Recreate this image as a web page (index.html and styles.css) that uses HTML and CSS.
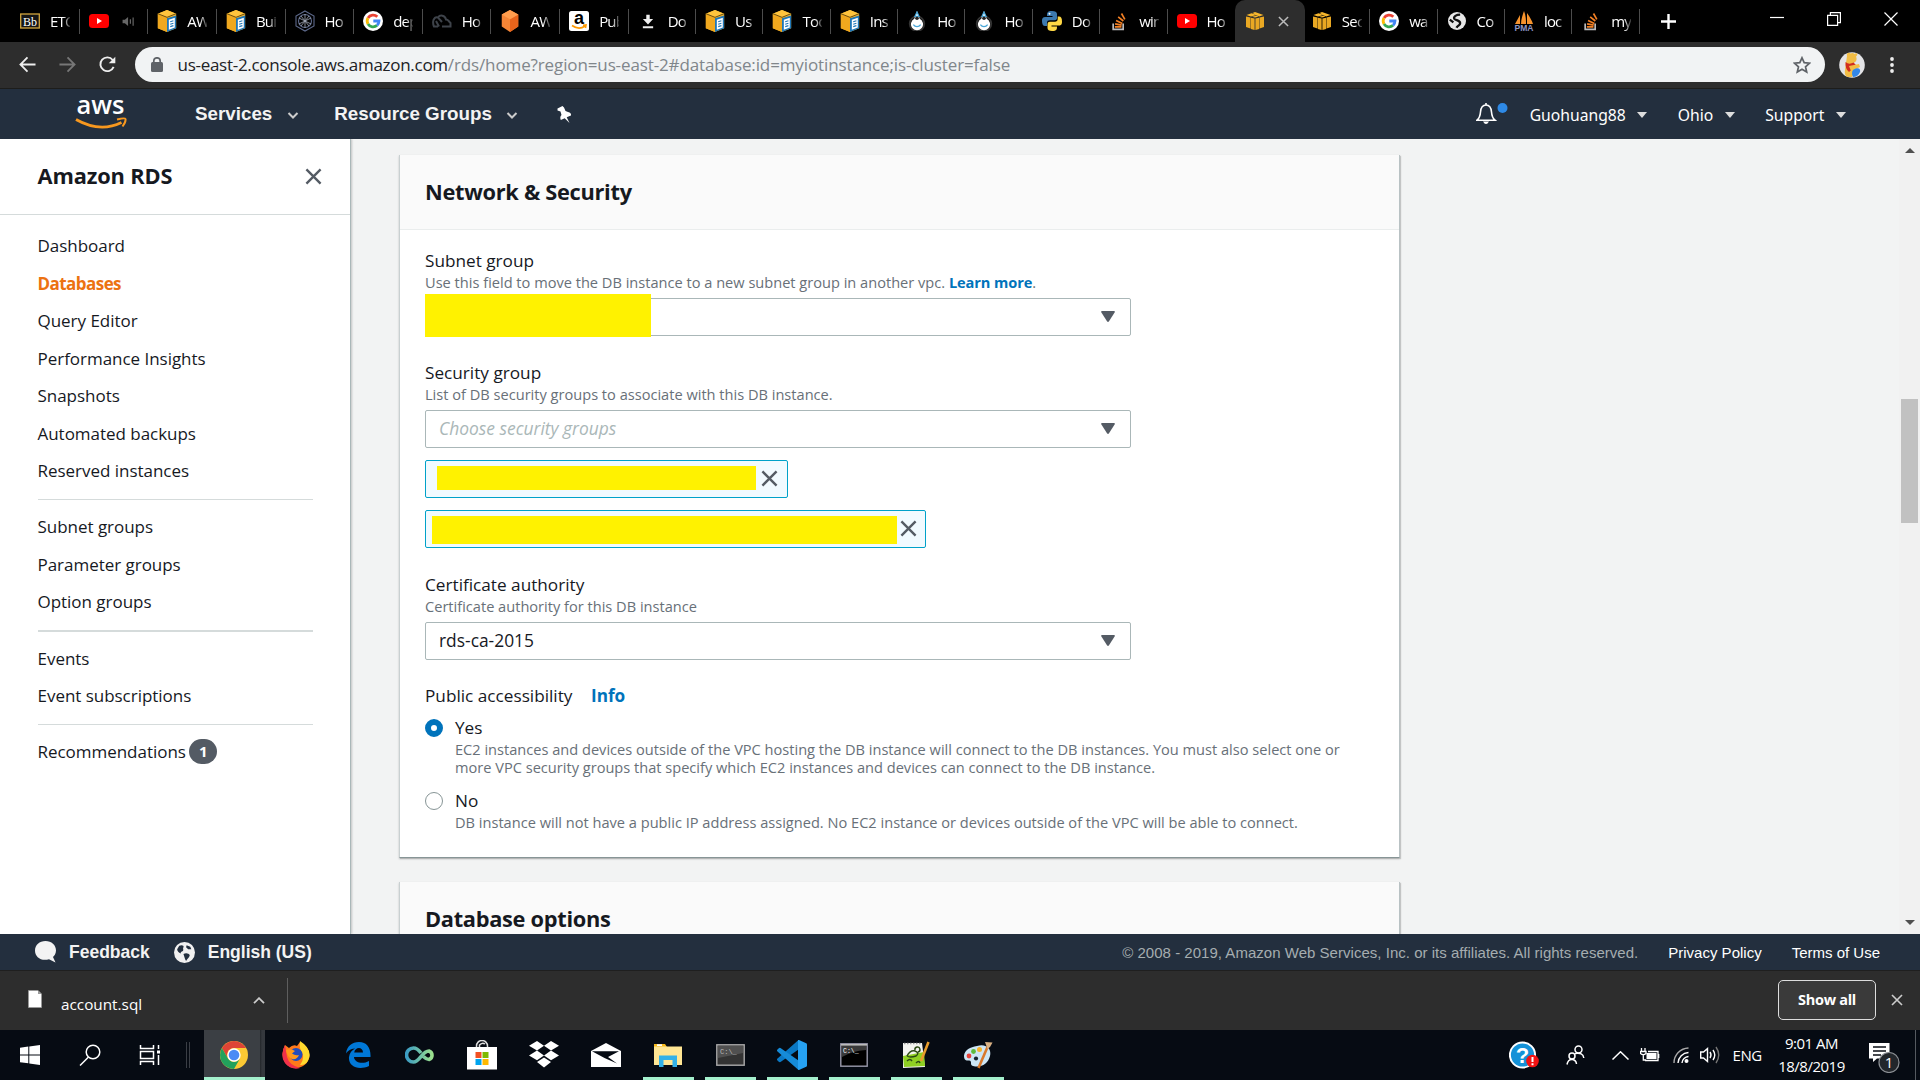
FILE: index.html
```html
<!DOCTYPE html>
<html lang="en">
<head>
<meta charset="utf-8">
<title>RDS · AWS Console</title>
<link rel="stylesheet" href="styles.css">
</head>
<body>
<svg class="defs" aria-hidden="true">
  <symbol id="i-doc" viewBox="0 0 20 24"><path fill="#f0b32e" d="M10 0 20 4 20 20 10 24 0 20 0 4Z"/><path fill="#f0a81e" d="M0 4 10 8V24L0 20Z"/><path fill="#ffc43d" d="M10 0 20 4 10 8 0 4Z"/><path stroke="#5d430c" stroke-width="1" fill="none" d="M0 4 10 8 20 4"/><path fill="#1f77b8" d="M10 9 20 6V20L10 24Z"/><path fill="#fff" d="M12 10.500 18.500 8.500V19L12 21.500Z"/><path stroke="#1f77b8" stroke-width="1.300" d="M13.500 12.800 17 11.700M13.500 15.500 17 14.400M13.500 18.200 17 17.100"/></symbol>
  <symbol id="i-cube" viewBox="0 0 18 18"><path fill="#e9a823" d="M0 4.500 4.500 5.500V16.500L0 15ZM4.900 5.700 8.600 6.400V18L4.900 17ZM9.400 6.400 13.100 5.700V17L9.400 18ZM13.500 5.500 18 4.500V15L13.500 16.500Z"/><path fill="#f6b62c" d="M.5 3 5.500 1.200 10.500 3 5 4.500ZM6.500.9 9 0 17.500 3 13 4.500ZM6 4.700 11.300 3.400 12 4.700 9 5.500Z"/></symbol>
  <symbol id="i-hex" viewBox="0 0 20 24"><path fill="#f58536" d="M10 0 19 5V18L10 24 1 18V5Z"/><path fill="#e8641b" d="M10 10 19 5V18L10 24Z"/><path fill="#ff9d4d" d="M10 0 19 5 10 10 1 5Z"/></symbol>
  <symbol id="i-yt" viewBox="0 0 20 14"><rect width="20" height="14" rx="3.500" fill="#f00"/><path fill="#fff" d="M8 4 13 7 8 10Z"/></symbol>
  <symbol id="i-google" viewBox="0 0 20 20"><circle cx="10" cy="10" r="10" fill="#fff"/><g fill="none" stroke-width="2.800"><path stroke="#ea4335" d="M5 7A6 6 0 0 1 14.300 5.800"/><path stroke="#fbbc05" d="M5 7A6 6 0 0 0 5 13"/><path stroke="#34a853" d="M5 13A6 6 0 0 0 14 14.400"/><path stroke="#4285f4" d="M14 14.400A6 6 0 0 0 16 10H10.300"/></g></symbol>
  <symbol id="i-drop" viewBox="0 0 20 22"><circle cx="10" cy="14" r="8" fill="none" stroke="#333" stroke-width="2"/><path fill="#fff" d="M10 0C11 4 12 5.500 13 8.500A6.700 6.700 0 1 1 7 8.500C8 5.500 9 4 10 0Z"/><path stroke="#49a7d8" fill="none" stroke-width="1.300" d="M10 1 12.300 6H7.700ZM6 15C8 18 12 18 14 15"/><circle cx="10" cy="8" r="2" fill="#222"/></symbol>
  <symbol id="i-stack" viewBox="0 0 20 24"><path fill="none" stroke="#bcbbbb" stroke-width="2" d="M3 15V22H15V15"/><path stroke="#f48024" stroke-width="2" d="M5 19H13M5.300 15.500 13.200 17M6.500 11.500 14 15M9 7 15.200 12M13 3 17 10"/></symbol>
  <symbol id="i-globe" viewBox="0 0 20 20"><circle cx="10" cy="10" r="10" fill="#f1f1f1"/><path fill="currentColor" d="M5 3.500C7 2.500 10 3 9 5 8 6.500 9.500 7 8.500 8.500 7 9 6 9.500 6.500 11 4.500 10.500 3 8.500 3 7ZM12 3 15.500 4.500 16.500 7 13.500 7 11.500 5ZM9 11.500C11 10 14 10.500 15 12.500 14.500 15 12.500 16 11.500 18 10 16 10 14 9 11.500Z"/></symbol>
  <symbol id="i-swirl" viewBox="0 0 20 20"><circle cx="10" cy="10" r="10" fill="#e8e8e8"/><path fill="none" stroke="#111" stroke-width="2.600" d="M13.500 3C9 3 6 5 7 7.500 8 9.500 13.500 9 13.500 12.500 13.500 15 10.500 15 9.500 17.500M2 8.500 6 11.500"/></symbol>
  <symbol id="i-x" viewBox="0 0 18 18"><path fill="none" stroke="currentColor" stroke-width="2.500" d="M1.500 1.500 16.500 16.500M16.500 1.500 1.500 16.500"/></symbol>
  <symbol id="i-tri" viewBox="0 0 14 11"><path fill="currentColor" d="M.8 0H13.200Q14.200.3 13.600 1.500L8 10.300Q7 11.500 6 10.300L.4 1.500Q-.2.300.8 0Z"/></symbol>
</svg>

<header class="tabs">
  <div class="tab wide"><svg class="fav" viewBox="0 0 20 20"><rect x=".7" y="3" width="18.600" height="14" fill="#151515" stroke="#d3a63e" stroke-width="1.300"/><text x="10" y="14.500" font-size="12" font-family="Liberation Serif, serif" fill="#fff" text-anchor="middle">Bb</text></svg><span>ETC</span></div>
  <div class="tab wide"><svg class="fav yt"><use href="#i-yt"/></svg><svg class="mute" viewBox="0 0 14 12"><path fill="#666" d="M0 4H2.500L6 1V11L2.500 8H0Z"/><path stroke="#666" stroke-width="1.300" fill="none" d="M8.500 3.500V8.500M11.500 1.500V10.500"/></svg></div>
  <div class="tab wide"><svg class="fav doc"><use href="#i-doc"/></svg><span>AW</span></div>
  <div class="tab wide"><svg class="fav doc"><use href="#i-doc"/></svg><span>Bui</span></div>
  <div class="tab wide"><svg class="fav doc" viewBox="0 0 20 22"><g fill="none" stroke="#5e6a8c" stroke-width="1.100"><path d="M10 1 19 6V16L10 21 1 16V6Z"/><circle cx="10" cy="11" r="6.500"/><path stroke="#a5abba" stroke-width=".8" d="M4 8 16 14M16 8 4 14M10 4V18M6 6 14 16M14 6 6 16"/></g></svg><span>Ho</span></div>
  <div class="tab wide"><svg class="fav"><use href="#i-google"/></svg><span>dep</span></div>
  <div class="tab wide"><svg class="fav" viewBox="0 0 20 20"><path fill="none" stroke="#3e434a" stroke-width="2" d="M6 15.500H2Q.5 12 1.500 9 3 5.500 6 6.500L10 11M7 15.500 4 10M6 6.500C8 3.500 13 4 14 8.500 16.500 8.500 16 10 18.500 12V15.500H10"/></svg><span>Ho</span></div>
  <div class="tab wide"><svg class="fav doc"><use href="#i-hex"/></svg><span>AW</span></div>
  <div class="tab wide"><svg class="fav" viewBox="0 0 20 20"><rect width="20" height="20" rx="2.500" fill="#fff"/><text x="10" y="13" font-size="18" font-weight="700" font-family="Liberation Sans, sans-serif" text-anchor="middle">a</text><path fill="none" stroke="#f90" stroke-width="1.600" d="M3 14.500Q10 19.500 16 15M14 14.300 17 14 16.500 17"/></svg><span>Pub</span></div>
  <div class="tab"><svg class="fav dl" viewBox="0 0 14 16"><path fill="#eee" d="M5 0H9V5H13L7 11.500 1 5H5ZM1 13.500H13V16H1Z"/></svg><span>Do</span></div>
  <div class="tab"><svg class="fav doc"><use href="#i-doc"/></svg><span>Us</span></div>
  <div class="tab"><svg class="fav doc"><use href="#i-doc"/></svg><span>Too</span></div>
  <div class="tab"><svg class="fav doc"><use href="#i-doc"/></svg><span>Ins</span></div>
  <div class="tab"><svg class="fav"><use href="#i-drop"/></svg><span>Ho</span></div>
  <div class="tab"><svg class="fav"><use href="#i-drop"/></svg><span>Ho</span></div>
  <div class="tab"><svg class="fav" viewBox="0 0 20 20"><path fill="#3c79ae" d="M10 0C5 0 5 2 5 5H10.500V6H3C0 6 0 9 0 10 0 13 1 15 3 15H5V12C5 10 6 9.300 8 9.300H12.500C14.500 9.300 15 8 15 7V3C15 1 13 0 10 0Z"/><path fill="#ffd845" d="M10 20C15 20 15 18 15 15.500H9.500V14.500H17C20 14.500 20 12 20 10.500 20 7 19 5.500 17 5.500H15.700V8C15.700 10 14.500 10.700 13 10.700H8C6 10.700 5.500 12 5.500 13.500V17C5.500 19 7 20 10 20Z"/><circle cx="7.500" cy="2.700" r="1" fill="#fff"/></svg><span>Do</span></div>
  <div class="tab"><svg class="fav"><use href="#i-stack"/></svg><span>win</span></div>
  <div class="tab last"><svg class="fav yt"><use href="#i-yt"/></svg><span>Ho</span></div>
  <div class="tab active"><svg class="fav cube"><use href="#i-cube"/></svg><svg class="tx" viewBox="0 0 18 18"><use href="#i-x"/></svg></div>
  <div class="tab"><svg class="fav cube"><use href="#i-cube"/></svg><span>Sec</span></div>
  <div class="tab"><svg class="fav"><use href="#i-google"/></svg><span>wa</span></div>
  <div class="tab"><svg class="fav globe"><use href="#i-swirl"/></svg><span>Co</span></div>
  <div class="tab"><svg class="fav" viewBox="0 0 20 20"><path fill="#f6932d" d="M1 13 6 4V13ZM7 13C7 8 9 3 10 0 12 5 12 9 12 13ZM13 13V2C16 6 18 10 19 13Z"/><text x="10" y="19.500" font-size="8.500" font-weight="700" font-family="Liberation Sans, sans-serif" fill="#8d97c4" text-anchor="middle">PMA</text></svg><span>loc</span></div>
  <div class="tab"><svg class="fav"><use href="#i-stack"/></svg><span>my</span></div>
  <svg class="plus" viewBox="0 0 15 15"><path stroke="#fff" stroke-width="2.400" d="M7.500 0V15M0 7.500H15"/></svg>
  <div class="winctl">
    <svg viewBox="0 0 14 14"><path stroke="#fff" stroke-width="1.200" d="M0 5.500H14"/></svg>
    <svg viewBox="0 0 14 14"><path fill="none" stroke="#fff" stroke-width="1.200" d="M.6 3.400H10.600V13.400H.6ZM3.400 3.400V.6H13.400V10.600H10.600"/></svg>
    <svg viewBox="0 0 14 14"><path stroke="#fff" stroke-width="1.200" d="M.5.500 13.500 13.500M13.500.500.5 13.500"/></svg>
  </div>
</header>

<div class="toolbar">
  <svg class="nav" viewBox="0 0 18 18"><path fill="none" stroke="#eee" stroke-width="1.900" d="M17.500 9H2M9 1.500 1.500 9 9 16.500"/></svg>
  <svg class="nav" viewBox="0 0 18 18"><path fill="none" stroke="#777" stroke-width="1.900" d="M.5 9H16M9 1.500 16.500 9 9 16.500"/></svg>
  <svg class="nav" viewBox="0 0 18 18"><path fill="none" stroke="#eee" stroke-width="2" d="M15.500 11.500A7.300 7.300 0 1 1 14.500 4.200"/><path fill="#eee" d="M17.300.8V7.800H10.300Z"/></svg>
  <div class="omni">
    <svg class="lock" viewBox="0 0 12 15"><rect y="5" width="12" height="10" rx="1.500" fill="#5f6368"/><path fill="none" stroke="#5f6368" stroke-width="1.700" d="M2.800 6V4A3.200 3.200 0 0 1 9.200 4V6"/></svg>
    <p class="url"><b>us-east-2.console.aws.amazon.com</b>/rds/home?region=us-east-2#database:id=myiotinstance;is-cluster=false</p>
    <svg class="star" viewBox="0 0 18 18"><path fill="none" stroke="#5f6368" stroke-width="1.700" d="M9 1.800 11.200 6.700 16.500 7.200 12.500 10.800 13.700 16 9 13.200 4.300 16 5.500 10.800 1.500 7.200 6.800 6.700Z"/></svg>
  </div>
  <svg class="avatar" viewBox="0 0 26 26"><circle cx="13" cy="13" r="12.800" fill="#e4e4e6"/><path fill="#f2bd45" d="M8 4C7 1 10 0 11.500 1.500Q14 .5 15.500 2C18-.5 19.500 3 17 4.500 18.500 8 17 10 14.500 11L17 18 13 25H9Q5 24 6 18Z"/><path fill="#d22d1e" d="M6.500 10Q10 13 14.500 10.500L18 14Q13 17 10 20 6 17 6.500 10Z"/><path fill="#f2bd45" d="M10 14 20 12 21 15 12 19Z"/><path fill="#3287e8" d="M14 18C18 15 22 16 21 20Q19 25 14 25 12 21 14 18Z"/></svg>
  <svg class="dots" viewBox="0 0 4 16"><g fill="#eee"><circle cx="2" cy="2" r="1.900"/><circle cx="2" cy="8" r="1.900"/><circle cx="2" cy="14" r="1.900"/></g></svg>
</div>

<nav class="aws">
  <svg class="awslogo" viewBox="0 0 52 32"><text x="25.500" y="16" textLength="48" lengthAdjust="spacingAndGlyphs" font-size="26" font-family="Open Sans, sans-serif" font-weight="600" fill="#fff" text-anchor="middle">aws</text><path fill="none" stroke="#f7981f" stroke-width="2.800" d="M1 21.500Q25 35 46.500 24.500"/><path fill="none" stroke="#f7981f" stroke-width="2" d="M42 21.500Q50 19.500 50.500 21 51 24 47.500 28.500"/></svg>
  <span class="m services">Services</span><svg class="chev" viewBox="0 0 12 7"><path fill="none" stroke="#ccc" stroke-width="2" d="M1.500 1 6 5.500 10.500 1"/></svg>
  <span class="m groups">Resource Groups</span><svg class="chev" viewBox="0 0 12 7"><path fill="none" stroke="#ccc" stroke-width="2" d="M1.500 1 6 5.500 10.500 1"/></svg>
  <svg class="pin" viewBox="0 0 15 17"><path fill="#fff" d="M5.500 0 7 1.500 8.500 5 11 6Q14.500 6.500 14 9.500L9.700 11.300 12.500 17 7.700 12.200 3.800 14Q2.500 11 4.500 9L3.500 5.500.5 4.500.5 2.500Z"/></svg>
  <span class="grow"></span>
  <svg class="bell" viewBox="0 0 32 22"><path fill="none" stroke="#fff" stroke-width="1.600" d="M10 2C5.500 2 4.800 5.500 4.500 9 4.200 13 3 15.500 1 17.200H19C17 15.500 15.800 13 15.500 9 15.200 5.500 14.500 2 10 2ZM10 0V2"/><path fill="#fff" d="M7 18.500H13Q10 23.500 7 18.500Z"/><circle cx="26.500" cy="5" r="5" fill="#2e8ae6"/></svg>
  <span class="u user">Guohuang88</span><i class="tri"></i>
  <span class="u ohio">Ohio</span><i class="tri"></i>
  <span class="u support">Support</span><i class="tri"></i>
</nav>

<div class="body">
  <aside class="side">
    <div class="sidehead"><h1>Amazon RDS</h1><svg class="x16"><use href="#i-x"/></svg></div>
    <ul>
      <li><span>Dashboard</span></li><li class="on"><span>Databases</span></li><li><span>Query Editor</span></li><li><span>Performance Insights</span></li><li><span>Snapshots</span></li><li><span>Automated backups</span></li><li><span>Reserved instances</span></li>
    </ul>
    <ul>
      <li><span>Subnet groups</span></li><li><span>Parameter groups</span></li><li><span>Option groups</span></li>
    </ul>
    <ul class="thick">
      <li><span>Events</span></li><li><span>Event subscriptions</span></li>
    </ul>
    <ul>
      <li><span>Recommendations</span><em>1</em></li>
    </ul>
  </aside>
  <main>
    <section class="panel">
      <h2>Network &amp; Security</h2>
      <div class="fields">
        <div class="field">
          <label>Subnet group</label>
          <p class="hint">Use this field to move the DB instance to a new subnet group in another vpc. <a>Learn more</a>.</p>
          <div class="select"><span class="mask"></span><svg class="arrow"><use href="#i-tri"/></svg></div>
        </div>
        <div class="field tall">
          <label>Security group</label>
          <p class="hint">List of DB security groups to associate with this DB instance.</p>
          <div class="select"><span class="ph">Choose security groups</span><svg class="arrow"><use href="#i-tri"/></svg></div>
          <div class="token t1"><span></span><svg><use href="#i-x"/></svg></div>
          <div class="token t2"><span></span><svg><use href="#i-x"/></svg></div>
        </div>
        <div class="field">
          <label>Certificate authority</label>
          <p class="hint">Certificate authority for this DB instance</p>
          <div class="select"><span class="val">rds-ca-2015</span><svg class="arrow"><use href="#i-tri"/></svg></div>
        </div>
        <div class="field">
          <label class="pa">Public accessibility<a>Info</a></label>
          <div class="radio"><i class="dot sel"></i><div><label>Yes</label><p class="hint d1">EC2 instances and devices outside of the VPC hosting the DB instance will connect to the DB instances. You must also select one or<br>more VPC security groups that specify which EC2 instances and devices can connect to the DB instance.</p></div></div>
          <div class="radio"><i class="dot"></i><div><label>No</label><p class="hint d1">DB instance will not have a public IP address assigned. No EC2 instance or devices outside of the VPC will be able to connect.</p></div></div>
        </div>
      </div>
    </section>
    <section class="panel next"><h2>Database options</h2></section>
  </main>
  <div class="scroll"><i class="up"></i><div class="track"><b></b></div><i class="down"></i></div>
</div>

<footer class="foot">
  <svg class="bubble" viewBox="0 0 22 22"><path fill="#f3f3f3" d="M10.500 0C16.500 0 21 4 21 9.500 21 13 19 15 18 16L20.500 21.500 14 18.300C6 20.500 0 16 0 9.500 0 4 4.500 0 10.500 0Z"/></svg>
  <span class="fb feed">Feedback</span>
  <svg class="world" viewBox="0 0 20 20"><use href="#i-globe"/></svg>
  <span class="fb">English (US)</span>
  <span class="grow"></span>
  <span class="copy">© 2008 - 2019, Amazon Web Services, Inc. or its affiliates. All rights reserved.</span>
  <span class="fl pp">Privacy Policy</span><span class="fl">Terms of Use</span>
</footer>

<div class="downloads">
  <svg class="file" viewBox="0 0 14 18"><path fill="#fff" stroke="#999" stroke-width=".8" d="M.5.500H10L13.500 4V17.500H.5Z"/><path fill="#999" d="M10 .5V4H13.500Z"/></svg>
  <span class="fname">account.sql</span>
  <svg class="caret" viewBox="0 0 12 7"><path fill="none" stroke="#ccc" stroke-width="1.800" d="M1 6.200 6 1.200 11 6.200"/></svg>
  <i class="vsep"></i>
  <span class="grow"></span>
  <button>Show all</button>
  <svg class="dx"><use href="#i-x"/></svg>
</div>

<div class="taskbar">
  <div class="ti sm"><svg width="20" height="20" viewBox="0 0 20 20"><path fill="#fff" d="M0 2.800 8.300 1.600V9.400H0ZM9.300 1.500 20 0V9.400H9.300ZM0 10.500H8.300V18.300L0 17.200ZM9.300 10.500H20V20L9.300 18.500Z"/></svg></div>
  <div class="ti sm"><svg width="22" height="22" viewBox="0 0 22 22"><g fill="none" stroke="#fff" stroke-width="1.500"><circle cx="14" cy="8" r="6.800"/><path d="M9.500 13 1 21.500"/></g></svg></div>
  <div class="ti sm"><svg width="22" height="22" viewBox="0 0 22 22"><path fill="none" stroke="#fff" stroke-width="1.500" d="M1.500 1V4.500H14.500V1M1.500 7.500H14.500V14.500H1.500ZM1.500 21V17.500H14.500V21M19.500 1V5M19.500 11V21"/><path fill="#fff" d="M18 6.500H21V9.500H18Z"/></svg></div>
  <div class="grip"></div>
  <div class="ti cur run"><svg width="28" height="28" viewBox="0 0 28 28"><circle cx="14" cy="14" r="14" fill="#fbc934"/><path fill="#de4436" d="M1.900 7A14 14 0 0 1 26.100 7H14A7 7 0 0 0 8 17.500Z"/><path fill="#22a15c" d="M1.900 7A14 14 0 0 0 14 28L20 17.500A7 7 0 0 1 8 17.500Z"/><circle cx="14" cy="14" r="6.700" fill="#fff"/><circle cx="14" cy="14" r="5.300" fill="#4c8bf5"/></svg></div>
  <div class="ti"><svg width="28" height="28" viewBox="0 0 28 28"><path fill="#ff7a1a" d="M3 4 7 7Q11 3 15 5L18 1Q27 6 27.500 14A13.500 13.500 0 1 1 .6 12Q1 8 3 4Z"/><path fill="#f0304a" d="M.6 12A13.500 13.500 0 0 0 18 27Q7 24 5 16L3 4Q1 8 .6 12Z"/><path fill="#ffd92e" d="M18 0Q29 7 27.400 16 25 25 18 24 23 18 20 11 17 8 18 0Z"/><circle cx="14" cy="13.500" r="6.500" fill="#214dbb"/><path fill="#ff9a1a" d="M4 9Q9 7 13 10L10 12.500Q13 15 17 14 15 19 10 18 5 16 4 9Z"/></svg></div>
  <div class="ti"><svg width="25" height="26" viewBox="0 0 25 26"><path fill="#0078d7" d="M0 11.500C1 4 6 0 13 0 21 0 25 6 24.500 15H8C8 20 16 23 23 19V24C12 29 2 24 3 15 3.500 11 6 8 9 6.500 3 7 1 10 0 11.500ZM8.200 10.500H17C17 4.500 9 4.500 8.200 10.500Z"/></svg></div>
  <div class="ti"><svg width="31" height="18" viewBox="0 0 31 18"><defs><linearGradient id="gi"><stop offset="0" stop-color="#3b9dc4"/><stop offset="1" stop-color="#9be08d"/></linearGradient></defs><path fill="none" stroke="url(#gi)" stroke-width="3.600" d="M16 7C13 3 10 2 8.500 2A7 7 0 0 0 8.500 16C15 16 17 5 24 5A4.500 4.500 0 0 1 24 13.500C21 13.500 20 12 18.500 10.500"/></svg></div>
  <div class="ti"><svg width="30" height="30" viewBox="0 0 30 30"><path fill="none" stroke="#ddd" stroke-width="1.500" d="M9.500 9V6A5.500 5.500 0 0 1 20.500 6V9M12.500 8V5A4 4 0 0 1 18 4"/><path fill="#fff" d="M0 7H30V29.500H0Z"/><path fill="#f25022" d="M8.500 12H14.500V18H8.500Z"/><path fill="#7fba00" d="M15.500 12H21.500V18H15.500Z"/><path fill="#00a4ef" d="M8.500 19H14.500V25H8.500Z"/><path fill="#ffb900" d="M15.500 19H21.500V25H15.500Z"/></svg></div>
  <div class="ti"><svg width="30" height="28" viewBox="0 0 30 28"><path fill="#fff" d="M8 0 15 4.800 8 9.600 0 4.800ZM22 0 30 4.800 22 9.600 15 4.800ZM0 14.400 8 9.600 15 14.400 8 19.200ZM22 9.600 30 14.400 22 19.200 15 14.400ZM8 21 15 16.500 22 21 15 26.500Z"/></svg></div>
  <div class="ti"><svg width="30" height="24" viewBox="0 0 30 24"><path fill="#fff" d="M0 8 15 0 30 8V24H0Z"/><path fill="#050a12" d="M1 8.300 28 8.300 17 14 26 20.500 13.500 15Z"/></svg></div>
  <div class="ti run"><svg width="28" height="24" viewBox="0 0 28 24"><path fill="#f7ba1c" d="M0 1H11L13 4H0Z"/><path fill="#ffe694" d="M0 3.500H28V22H0Z"/><path fill="#fff" d="M3 1.300H8V3H3Z"/><path fill="#32b1e8" d="M5 12.500H23V24H18.500V17H9.500V24H5Z"/></svg></div>
  <div class="ti run"><svg width="29" height="22" viewBox="0 0 29 22"><rect x=".8" y=".8" width="27.400" height="20.400" fill="#333" stroke="#aaa" stroke-width="1.400"/><path fill="#505050" d="M2 2H27V9L2 14Z"/><text x="4" y="10" font-size="7" font-family="Liberation Mono, monospace" fill="#bbb">C:\_</text></svg></div>
  <div class="ti run"><svg width="30" height="30" viewBox="0 0 30 30"><path fill="#0a78c4" d="M21.500 0V9.500L3.500 22Q2.500 22.500 1.500 21.500L0 20Q-.3 19.200.5 18.500Z"/><path fill="#168bd8" d="M21.500 30V20.500L3.500 8Q2.500 7.500 1.500 8.500L0 10Q-.3 10.800.5 11.500Z"/><path fill="#26a2f3" d="M21 0Q21.500-.1 22 0L29.200 3.300Q30 3.800 30 4.600V25.400Q30 26.200 29.200 26.700L22 30 21 29.800Z"/></svg></div>
  <div class="ti run"><svg width="28" height="24" viewBox="0 0 28 24"><rect x=".8" y=".8" width="26.400" height="22.400" fill="#000" stroke="#99a" stroke-width="1.400"/><path fill="#3a3a3a" d="M2 2H26V7Q12 8 2 14Z"/><path fill="#bbb" d="M1 1H27V2.600H1Z"/><text x="3" y="9.500" font-size="6.500" font-family="Liberation Mono, monospace" fill="#fff">C:\_</text></svg></div>
  <div class="ti run"><svg width="28" height="28" viewBox="0 0 28 28"><path fill="#f4f4f0" d="M1 2H20L23 26 1 27Z"/><path fill="#8fd022" d="M1 15 22 11 23 25 2 26Z"/><path fill="none" stroke="#2c4a14" stroke-width="1.500" d="M5 15Q8 9 13 10 18 12 14 15 8 17 5 15M5 20Q8 17 10 20M13 9A2.500 2.500 0 1 1 16 11M14 22Q17 19 18 22"/><path stroke="#999" stroke-dasharray="1.500 1.500" stroke-width="1.500" d="M2 2.500H19"/><path stroke="#e89c2c" stroke-width="2.600" d="M26.500 1 19 20"/></svg></div>
  <div class="ti run"><svg width="29" height="28" viewBox="0 0 29 28"><path fill="#cde6f5" d="M13 5C22 2 28 8 26 15 24 23 17 27 9 25 5 24 9 20 5 19.500 1 20 0 18 0 14.500 1 9 6 6 13 5Z"/><circle cx="5" cy="15" r="2.400" fill="#e8433a"/><circle cx="9.500" cy="10.500" r="2.400" fill="#5dbb3c"/><circle cx="15.500" cy="8.500" r="2.500" fill="#f7b32b"/><circle cx="12" cy="17.500" r="2.100" fill="#16242e"/><path stroke="#d9792b" stroke-width="2.600" d="M23.500 6 14.500 27"/><path fill="#d9b183" d="M21 1 28.500 1.500 26 6 23.500 8Z"/></svg></div>
  <span class="grow"></span>
  <div class="tray">
    <svg class="help" viewBox="0 0 30 28"><circle cx="13.500" cy="14" r="12.600" fill="#1492d8" stroke="#fff" stroke-width="2"/><text x="13.500" y="22" font-size="22" font-weight="700" font-family="Liberation Sans, sans-serif" fill="#fff" text-anchor="middle">?</text><circle cx="23.500" cy="20" r="6.300" fill="#f31313"/><path stroke="#fff" stroke-width="2" d="M23.500 16V21M23.500 22.300V24.300"/></svg>
    <svg class="people" viewBox="0 0 19 20"><g fill="none" stroke="#fff" stroke-width="1.500"><circle cx="12.500" cy="4.500" r="3.500"/><circle cx="6" cy="11" r="3"/><path d="M9 8.500Q17 7 17.800 13M1 19.500Q2 14 6.500 14.500 10 15 10.500 19"/></g></svg>
    <svg class="up2" viewBox="0 0 17 9"><path fill="none" stroke="#fff" stroke-width="1.500" d="M.5 8.500 8.500.800 16.500 8.500"/></svg>
    <svg class="bat" viewBox="0 0 20 14"><path fill="none" stroke="#fff" stroke-width="1.300" d="M5 12.500H18V3.500H8M18.700 6V10M1.500 0V3M5 0V3M.5 3.500H6V5.500Q3.300 8 .5 5.500ZM3.300 7V12H6"/><path fill="#fff" d="M6.500 5H16.500V11H6.500Z"/></svg>
    <svg class="wifi" viewBox="0 0 16 16"><g fill="none" stroke="#aaa" stroke-width="1.400"><path d="M1 16A15 15 0 0 1 15.500 1"/><path stroke="#fff" d="M5 16A11 11 0 0 1 15.500 5.500M9 16A7 7 0 0 1 15.500 9.500"/></g><circle cx="13.500" cy="14" r="2" fill="#fff"/></svg>
    <svg class="vol" viewBox="0 0 20 18"><path fill="none" stroke="#fff" stroke-width="1.400" d="M.7 6H3.500L7.500 2.500V15.500L3.500 12H.7ZM10 6Q12 9 10 12M13 4Q16.500 9 13 14"/><path fill="none" stroke="#777" stroke-width="1.400" d="M16 1Q21.500 9 16 17"/></svg>
    <span class="eng">ENG</span>
    <div class="clock"><span>9:01 AM</span><span>18/8/2019</span></div>
    <svg class="note" viewBox="0 0 32 30"><path fill="#fff" d="M0 0H20.500V15.500H8L4 19V15.500H0Z"/><path stroke="#0a0e14" stroke-width="1.300" d="M4 4H17M4 8H17M4 12H12"/><circle cx="20" cy="19.500" r="10" fill="#22262b" stroke="#8b8f94" stroke-width="1.200"/><text x="20" y="25" font-size="15" font-family="Open Sans, sans-serif" fill="#fff" text-anchor="middle">1</text></svg>
  </div>
</div>
</body>
</html>
```
FILE: styles.css
```css
* { box-sizing: border-box; margin: 0; padding: 0; }
body { width: 1920px; height: 1080px; overflow: hidden; display: flex; flex-direction: column; font-family: "Open Sans", sans-serif; color: #16191f; background: #000; }
svg { flex: none; display: block; }
.defs { display: none; }
.grow { flex: 1; }
ul { list-style: none; }

/* browser tabs */
.tabs { height: 42px; flex: none; display: flex; background: #000; padding-left: 11px; color: #fff; }
.tab { width: 67.350px; height: 42px; flex: none; display: flex; align-items: center; padding-left: 9px; position: relative; font-size: 15px; }
.tab.wide { width: 68.650px; }
.tab::after { content: ""; position: absolute; right: 0; top: 9px; height: 25px; width: 1px; background: #4c4c4c; }
.tab.active::after, .tab.last::after { display: none; }
.tab span { margin-left: 10px; width: 20px; overflow: hidden; white-space: nowrap; letter-spacing: -.8px; line-height: 24px; -webkit-mask-image: linear-gradient(90deg, #000 65%, #0003); mask-image: linear-gradient(90deg, #000 65%, #0003); }
.fav { width: 20px; height: 20px; }
.fav.doc { height: 22px; }
.fav.yt { height: 14px; }
.fav.cube { width: 18px; height: 18px; margin: 0 1px; }
.fav.dl { width: 12px; height: 15px; margin: 0 4px; }
.fav.globe { width: 18px; height: 18px; margin: 0 1px; }
.mute { width: 14px; height: 11px; margin-left: 13px; }
.tab.active { background: #2d2d2d; border-radius: 10px 10px 0 0; width: 70px; margin-right: -2px; padding-left: 10px; }
.tx { width: 11px; height: 11px; margin-left: 13px; color: #bbb; }
.plus { width: 15px; height: 15px; margin: 14px 0 0 21px; }
.winctl { display: flex; gap: 43px; margin-left: auto; margin-right: 22px; padding-top: 12px; }
.winctl svg { width: 14px; height: 14px; }

/* address bar */
.toolbar { height: 47px; flex: none; display: flex; align-items: center; background: #2d2d2d; border-bottom: 1px solid #1d1d1b; padding: 0 23px 1px 19px; }
.nav { width: 17px; height: 17px; margin-right: 23px; }
.nav + .nav + .nav { margin-right: 19px; }
.omni { width: 1690px; height: 35px; border-radius: 18px; background: #f1f3f4; display: flex; align-items: center; padding: 0 14px 0 16px; }
.lock { width: 12px; height: 15px; margin-right: 14.500px; }
.url { flex: 1; font-size: 17px; letter-spacing: -.12px; color: #80868b; white-space: nowrap; line-height: 34px; }
.url b { font-weight: 400; color: #202124; letter-spacing: -.28px; }
.star { width: 18px; height: 18px; }
.avatar { width: 26px; height: 26px; margin-left: 14px; }
.dots { width: 4px; height: 16px; margin-left: 25px; }

/* console navigation */
.aws { height: 50px; flex: none; background: #232f3e; display: flex; align-items: center; padding: 0 74px 0 75px; color: #fff; }
.awslogo { width: 52px; height: 32px; margin-right: 68px; }
.m { font: 700 18.800px/50px "Liberation Sans", sans-serif; color: #f3f3f3; padding-bottom: 1px; }
.chev { width: 12px; height: 7px; margin: 3px 35.500px 0 14.500px; }
.pin { width: 15px; height: 17px; margin-left: 3.500px; }
.bell { width: 32px; height: 22px; margin-right: 22px; }
.u { font-family: "Noto Sans", sans-serif; font-size: 15.700px; padding-top: 2px; }
.tri { width: 0; height: 0; border: 5px solid transparent; border-top: 6px solid #ddd; border-bottom: 0; margin: 2px 30.500px 0 11.500px; }
.tri:last-child { margin-right: 0; }

/* page */
.body { height: 795px; flex: none; display: flex; background: #f2f3f3; overflow: hidden; }
.side { width: 351px; background: #fff; border-right: 1px solid #aab7b8; box-shadow: 1px 0 2px #0003; }
.sidehead { height: 76px; border-bottom: 1px solid #d5dbdb; display: flex; align-items: center; justify-content: space-between; padding: 0 28.500px 1px 37.500px; }
h1, h2 { font-size: 21.800px; font-weight: 700; letter-spacing: -.3px; line-height: 30px; white-space: nowrap; }
h1 { letter-spacing: -.15px; }
.x16 { width: 17px; height: 17px; color: #545b64; margin-top: 1px; }
.side ul { margin: 0 37px 0 37.500px; padding: 8.500px 0 9.500px; border-top: 1px solid #d5dbdb; }
.side ul:nth-of-type(1) { padding-top: 12px; border-top: 0; padding-bottom: 9px; }
.side ul.thick { border-top-width: 2px; padding: 7.500px 0 9.500px; }
.side ul:last-child { padding-top: 8px; }
.side li { height: 37.500px; display: flex; align-items: center; font-size: 17px; letter-spacing: -.03px; white-space: nowrap; }
.side li.on { color: #ec7211; font-weight: 700; letter-spacing: -.55px; }
.side em { font: 700 15px/25px "Open Sans", sans-serif; color: #fff; background: #545b64; width: 28px; height: 25px; border-radius: 12.500px; text-align: center; margin-left: 3.500px; }
main { flex: 1; padding: 16px 0 0 48px; }
.panel { width: 1001px; height: 703px; background: #fff; border-left: 1px solid #c9d0d1; border-right: 1px solid #b9c2c4; border-bottom: 1px solid #879596; box-shadow: 0 1px 2px #0003, 1px 1px 1px #0002; margin-bottom: 24px; }
.panel h2 { height: 75px; background: #fafafa; border-bottom: 1px solid #eaeded; padding: 22px 25px 0; }
.fields { padding: 19px 25px; }
.field { height: 112px; }
.field.tall { height: 212px; }
label { display: block; font-size: 17.200px; line-height: 24px; white-space: nowrap; }
.hint { font-size: 14.600px; line-height: 19px; padding-bottom: 1px; color: #687078; white-space: nowrap; }
.hint a { letter-spacing: -.1px; }
a { color: #0073bb; font-weight: 700; }
.select { width: 706px; height: 38px; margin-top: 5px; border: 1px solid #aab7b8; border-radius: 2px; display: flex; align-items: center; justify-content: space-between; padding: 0 15px 2px 13px; font-size: 17.400px; }
.mask { flex: none; width: 226px; height: 43px; background: #fff200; margin-left: -14px; margin-bottom: 1px; }
.ph { color: #aab7b8; font-style: italic; }
.arrow { width: 14px; height: 11px; color: #545b64; margin-top: 1px; }
.token { height: 38px; margin-top: 12px; border: 1px solid #00a1c9; border-radius: 2px; background: #f1faff; display: flex; align-items: center; justify-content: space-between; }
.token span { background: #fff200; }
.token svg { width: 17px; height: 17px; color: #545b64; margin-bottom: 1px; }
.t1 { width: 363px; padding: 0 9px 0 11px; }
.t1 span { width: 319px; height: 24px; margin-bottom: 3px; }
.t2 { width: 501px; padding: 0 8px 0 6px; }
.t2 span { width: 465px; height: 28px; margin-top: 1px; }
.pa { margin-top: -1px; }
.pa a { margin-left: 18.500px; }
.radio { display: flex; margin-top: 7px; }
.radio label { line-height: 25px; }
.radio + .radio { margin-top: 10.500px; }
.dot { width: 18px; height: 18px; border-radius: 50%; border: 1px solid #879596; margin: 4px 12px 0 0; }
.dot.sel { border: 6px solid #0073bb; }
.hint.d1 { line-height: 18.400px; }
.scroll { width: 21px; background: #f1f1f1; display: flex; flex-direction: column; align-items: center; }
.scroll i { width: 0; height: 0; border: 5px solid transparent; }
.scroll .up { border-top: 0; border-bottom-color: #505050; margin-top: 9px; }
.scroll .down { border-bottom: 0; border-top-color: #505050; margin-bottom: 9px; }
.track { flex: 1; padding-top: 246px; }
.track b { display: block; width: 17px; height: 124px; background: #c1c1c1; }

/* console footer */
.foot { height: 36px; flex: none; background: #232f3e; display: flex; align-items: center; padding: 0 40px 0 35px; font: 15px "Liberation Sans", sans-serif; color: #fff; }
.bubble { width: 22px; height: 22px; margin-right: 12px; }
.world { width: 21px; height: 21px; color: #232f3e; margin: 0 13px 0 24px; }
.fb { font-weight: 700; font-size: 17.500px; color: #f3f3f3; }
.copy { color: #a5adb0; margin-right: 30px; letter-spacing: .025px; }
.pp { margin-right: 30px; }

/* downloads */
.downloads { height: 60px; flex: none; background: #2d2d2d; border-top: 1px solid #1f1f1f; display: flex; align-items: center; padding: 0 17px 0 28px; color: #fff; }
.file { width: 14px; height: 18px; margin: 0 19px 4px 0; }
.fname { font-size: 15.300px; width: 192px; padding-top: 7px; }
.caret { width: 12px; height: 7px; margin-bottom: 1px; }
.vsep { width: 1px; height: 45px; background: #5e5e5e; margin-left: 22px; }
button { width: 98px; height: 40px; border: 1px solid #ddd; border-radius: 5px; background: #3a3a3a; color: #fff; font: 700 14.500px "Open Sans", sans-serif; letter-spacing: -.3px; margin-bottom: 1px; padding-bottom: 2px; }
.dx { width: 12px; height: 12px; color: #ccc; margin: 0 0 2px 15px; }

/* taskbar */
.taskbar { height: 50px; flex: none; background: #060b13; display: flex; }
.ti { width: 51px; margin-right: 11px; display: flex; align-items: center; justify-content: center; border-bottom: 3px solid transparent; padding-top: 3px; }
.ti.sm { width: 60px; margin: 0; }
.ti.run { border-color: #a4f0cd; }
.ti.cur { width: 61px; margin-right: 5.500px; padding-right: 1px; background: linear-gradient(90deg, #3b3f44 56px, #22262a 56px, #34383d 58px); }
.grip { width: 4px; height: 26px; margin: 12px 14px 0 6px; border: solid #3a3e45; border-width: 0 1px; }
.tray { display: flex; align-items: center; color: #fff; border-right: 1px solid #555a60; margin-right: 4px; padding-right: 14.500px; }
.help { width: 30px; height: 28px; margin-right: 27px; }
.people { width: 19px; height: 20px; margin-right: 27px; }
.up2 { width: 17px; height: 9px; margin-right: 11px; }
.bat { width: 20px; height: 14px; margin-right: 13px; }
.wifi { width: 16px; height: 16px; margin-right: 11px; }
.vol { width: 20px; height: 18px; margin-right: 12.500px; }
.eng { font-size: 15px; letter-spacing: -.4px; width: 45px; }
.clock { display: flex; flex-direction: column; align-items: center; width: 68px; font-size: 15px; line-height: 23px; letter-spacing: -.5px; margin-right: 23px; white-space: nowrap; }
.note { width: 32px; height: 30px; margin-top: 6px; }
```
